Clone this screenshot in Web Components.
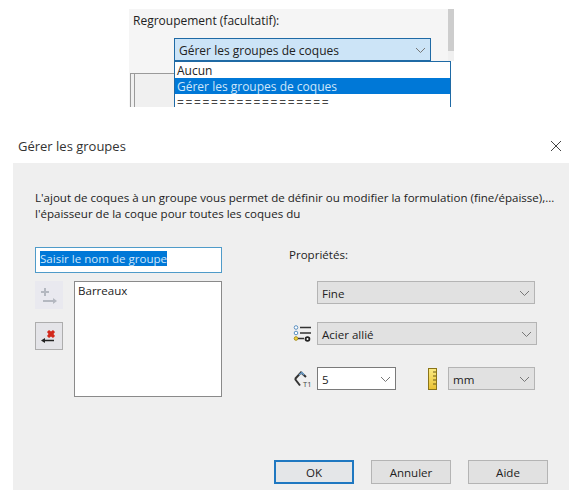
<!DOCTYPE html>
<html>
<head>
<meta charset="utf-8">
<style>
  html, body { margin: 0; padding: 0; background: #fff; }
  body { width: 580px; height: 497px; overflow: hidden; font: 11.55px "Open Sans", sans-serif; color: #222; }
</style>
</head>
<body>
<top-snippet></top-snippet>
<groups-dialog></groups-dialog>

<script>
const caret = `<svg width="11" height="7" viewBox="0 0 11 7"><path d="M1 1l4.500 4.500L10 1" fill="none" stroke="#777" stroke-width="1"/></svg>`;

// combo box, slot holds the current value
class WinCombo extends HTMLElement {
  constructor() {
    super();
    const shadow = this.attachShadow({ mode: "open" });
    shadow.innerHTML = `
      <style>
        :host {
          display: flex;
          align-items: center;
          justify-content: space-between;
          box-sizing: border-box;
          height: 23px;
          padding: 1px 4px 0 4px;
          background: #e1e1e1;
          border: 1px solid #b4b4b4;
        }
        :host([white]) { background: #fff; border-color: #7a7a7a; }
        :host([active]) { background: #cce4f7; border-color: #1f6aa5; }
      </style>
      <slot></slot>${caret}`;
  }
}
customElements.define("win-combo", WinCombo);

class WinButton extends HTMLElement {
  constructor() {
    super();
    const shadow = this.attachShadow({ mode: "open" });
    shadow.innerHTML = `
      <style>
        :host {
          display: flex;
          align-items: center;
          justify-content: center;
          box-sizing: border-box;
          width: 80px;
          height: 24px;
          background: #e1e1e1;
          border: 1px solid #b4b4b4;
        }
        :host([primary]) { border: 2px solid #1f78c1; background: #e4e6e8; }
      </style>
      <slot></slot>`;
  }
}
customElements.define("win-button", WinButton);

// cropped piece of the parent property page with the open dropdown
const topTemplate = document.createElement("template");
topTemplate.innerHTML = /*html*/ `
  <style>
    :host { display: block; padding-top: 9px; height: 98px; font-size: 12px; }
    #panel {
      position: relative;
      margin-left: 129px;
      width: 319px;
      height: 98px;
      background: #f5f5f5;
      padding: 4px 0 0 4px;
      box-sizing: border-box;
    }
    #label { line-height: 16px; }
    win-combo { width: 257px; margin: 9px 0 0 41px; }
    #scroll { position: absolute; left: 319px; top: 0; width: 6px; height: 42px; background: #cdcdcd; }
    #track { position: absolute; left: 319px; top: 42px; width: 6px; height: 10px; background: #f0f0f0; }
    #group {
      position: absolute; left: 1px; top: 64px; width: 44px; height: 34px;
      background: #f0f0f0;
      border-top: 1px solid #9a9a9a; border-left: 1px solid #9a9a9a;
      box-sizing: border-box;
    }
    #group::before {
      content: ""; position: absolute; left: 3px; top: 0; bottom: 0; border-left: 1px solid #9a9a9a;
    }
    #list {
      position: absolute; left: 45px; top: 52px; width: 277px; height: 46px;
      box-sizing: border-box;
      background: #fff; border: 1px solid #1f6aa5; border-bottom: 0; line-height: 16px;
    }
    #list div { padding: 1px 0 0 2px; height: 15px; }
    #list .sel { background: #0078d7; color: #cfe6fa; }
    #list .eq { letter-spacing: 1.65px; color: #444; }
  </style>
  <div id="panel">
    <div id="label">Regroupement (facultatif):</div>
    <win-combo active>Gérer les groupes de coques</win-combo>
    <div id="group"></div>
    <div id="scroll"></div>
    <div id="track"></div>
    <div id="list">
      <div>Aucun</div>
      <div class="sel">Gérer les groupes de coques</div>
      <div class="eq">==================</div>
    </div>
  </div>
`;
class TopSnippet extends HTMLElement {
  constructor() {
    super();
    this.attachShadow({ mode: "open" }).append(topTemplate.content.cloneNode(true));
  }
}
customElements.define("top-snippet", TopSnippet);

const dialogTemplate = document.createElement("template");
dialogTemplate.innerHTML = /*html*/ `
  <style>
    :host { display: block; margin: 28px 11px 0 13px; }
    #title {
      display: flex; align-items: center; justify-content: space-between; box-sizing: border-box;
      height: 28px; padding: 0 7px 6px 5px; font-size: 13px; color: #333;
    }
    #body {
      display: flex; flex-direction: column;
      background: #efefef; height: 327px; padding: 27px 0 6px 22px; box-sizing: border-box;
    }
    #intro { line-height: 16px; white-space: nowrap; height: 32px; }
    #cols { display: flex; margin-top: 25px; }
    #left { width: 187px; }
    #name {
      box-sizing: border-box; height: 26px; background: #fff; border: 1px solid #4f9bc9;
      padding: 3px 0 0 4px; line-height: 16px;
    }
    #name span { background: #0078d7; color: #cfe6fa; }
    #lower { display: flex; margin-top: 8px; }
    #tools { width: 39px; display: flex; flex-direction: column; gap: 13px; }
    .tool {
      width: 28px; height: 28px; box-sizing: border-box; display: flex; align-items: center; justify-content: center;
    }
    .tool.off { background: #e9e9ef; }
    .tool.on { background: #e4e4e8; border: 1px solid #adadad; }
    #list {
      width: 148px; height: 116px; box-sizing: border-box; background: #fff; border: 1px solid #8a8a8a;
      padding: 1px 3px; line-height: 16px;
    }
    #right { margin-left: 67px; width: 248px; }
    #props { line-height: 16px; }
    .row { display: flex; align-items: center; }
    .ico { width: 28px; height: 23px; box-sizing: border-box; padding-right: 4px; display: flex; align-items: center; justify-content: flex-end; }
    #r1 { margin-top: 18px; }
    #r1 win-combo { width: 218px; margin-left: 28px; }
    #r2 { margin-top: 18px; }
    #r2 win-combo { width: 220px; }
    #r3 { margin-top: 22px; }
    #r3 .five { width: 79px; }
    #r3 .ruler { width: 52px; padding-right: 11px; }
    #r3 .mm { width: 87px; }
    #footer { display: flex; gap: 17px; margin: auto 0 0 239px; }
  </style>
  <div id="title">
    <span>Gérer les groupes</span>
    <svg width="12" height="12" viewBox="0 0 12 12"><path d="M1 1l10 10M11 1L1 11" stroke="#444" stroke-width="1" fill="none"/></svg>
  </div>
  <div id="body">
    <div id="intro">L'ajout de coques à un groupe vous permet de définir ou modifier la formulation (fine/épaisse),...<br>l'épaisseur de la coque pour toutes les coques du</div>
    <div id="cols">
      <div id="left">
        <div id="name"><span>Saisir le nom de groupe</span></div>
        <div id="lower">
          <div id="tools">
            <div class="tool off">
              <svg width="18" height="18" viewBox="0 0 18 18"><path d="M5 2v8M1 6h8" stroke="#b4b8c0" stroke-width="2" fill="none"/><path d="M3 15h11" stroke="#b4b8c0" stroke-width="2" fill="none"/><path d="M13 12l4 3-4 3z" fill="#b4b8c0"/></svg>
            </div>
            <div class="tool on">
              <svg width="18" height="18" viewBox="0 0 18 18"><path d="M9 3l2 1.500L13 3l2 2-1.500 2L15 9l-2 2-2-1.500L9 11 7 9l1.500-2L7 5z" fill="#d2281c"/><path d="M4 13.500h10" stroke="#222" stroke-width="1.500" fill="none"/><path d="M5 11L1 13.500 5 16z" fill="#222"/></svg>
            </div>
          </div>
          <div id="list">Barreaux</div>
        </div>
      </div>
      <div id="right">
        <div id="props">Propriétés:</div>
        <div class="row" id="r1"><win-combo>Fine</win-combo></div>
        <div class="row" id="r2">
          <div class="ico">
            <svg width="20" height="20" viewBox="0 0 20 20"><circle cx="3" cy="3.500" r="1.800" fill="#fff" stroke="#5a8fc0"/><circle cx="3" cy="9" r="1.800" fill="#fff" stroke="#5a8fc0"/><circle cx="3" cy="14.500" r="1.800" fill="#f2d23c" stroke="#a89020"/><path d="M7 3.500h11M7 9h11" stroke="#333" stroke-width="1.500"/><path d="M5 14.500h6" stroke="#333" stroke-width="1.500"/><circle cx="14.500" cy="15" r="2.800" fill="#222"/><circle cx="14.500" cy="15" r="1" fill="#fff"/></svg>
          </div>
          <win-combo>Acier allié</win-combo>
        </div>
        <div class="row" id="r3">
          <div class="ico">
            <svg width="20" height="20" viewBox="0 0 20 20"><path d="M2 10L8 3.500l5 4.500" fill="none" stroke="#333" stroke-width="2"/><path d="M2 10l5 6.500" fill="none" stroke="#333" stroke-width="2"/><path d="M6 6l3-2.500 2 2.500" fill="none" stroke="#6a9cc8" stroke-width="1.500"/><text x="10" y="18" font-size="7.500" fill="#444" font-family="Open Sans, sans-serif">T1</text></svg>
          </div>
          <win-combo class="five" white>5</win-combo>
          <div class="ico ruler">
            <svg width="9" height="22" viewBox="0 0 9 22"><defs><linearGradient id="rul" x1="0" y1="0" x2="0" y2="1"><stop offset="0" stop-color="#fbeb84"/><stop offset="1" stop-color="#e8c030"/></linearGradient></defs><rect x="0.500" y="0.500" width="8" height="21" fill="url(#rul)" stroke="#8a7418"/><path d="M5 4h3M5 8h3M5 12h3M5 16h3" stroke="#6a5810"/></svg>
          </div>
          <win-combo class="mm">mm</win-combo>
        </div>
      </div>
    </div>
    <div id="footer">
      <win-button primary>OK</win-button>
      <win-button>Annuler</win-button>
      <win-button>Aide</win-button>
    </div>
  </div>
`;
class GroupsDialog extends HTMLElement {
  constructor() {
    super();
    this.attachShadow({ mode: "open" }).append(dialogTemplate.content.cloneNode(true));
  }
}
customElements.define("groups-dialog", GroupsDialog);
</script>
</body>
</html>
